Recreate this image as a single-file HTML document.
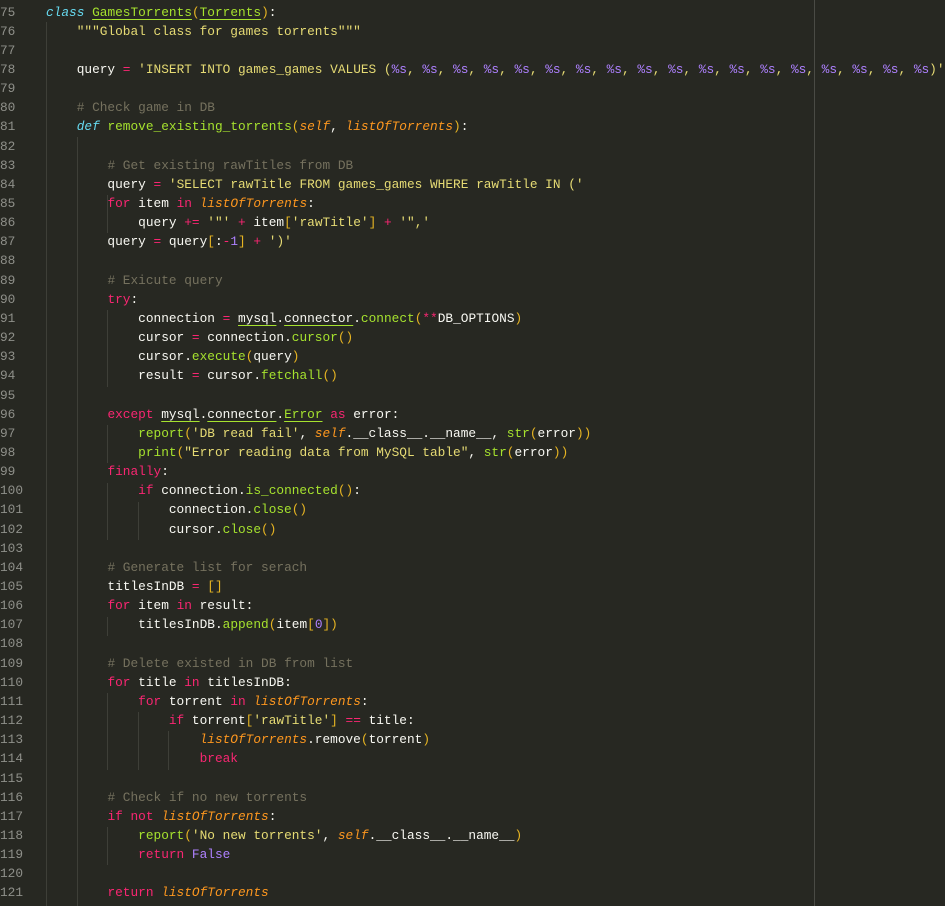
<!DOCTYPE html>
<html><head><meta charset="utf-8"><style>
html,body{margin:0;padding:0;background:#272822;width:945px;height:906px;overflow:hidden}
#w{position:relative;width:945px;height:906px;font-family:"Liberation Mono",monospace;font-size:12.8px;color:#f8f8f2}
.ln{position:absolute;left:0;width:40px;color:#8f908a}
.cd{position:absolute;left:46px;white-space:pre}
.row{position:absolute;left:0;height:19.15px;line-height:19.15px;width:945px}
.k{color:#f92672}.s{color:#e6db74}.c{color:#75715e}.f{color:#a6e22e}
.i{color:#66d9ef;font-style:italic}.p{color:#fd971f;font-style:italic}.n{color:#ae81ff}
.b{color:#e6b422}.u{text-decoration:underline;text-decoration-color:#a6e22e;text-underline-offset:3px}
.g{position:absolute;width:1px;background:#3e3f38}
</style></head><body><div id="w">
<div class="g" style="left:814px;top:0;height:906px;background:#4a4b45"></div>
<div class="g" style="left:46px;top:22px;height:884px"></div>
<div class="g" style="left:77px;top:137px;height:769px"></div>
<div class="g" style="left:107px;top:195px;height:38px"></div>
<div class="g" style="left:107px;top:310px;height:77px"></div>
<div class="g" style="left:107px;top:425px;height:38px"></div>
<div class="g" style="left:107px;top:483px;height:57px"></div>
<div class="g" style="left:138px;top:502px;height:38px"></div>
<div class="g" style="left:107px;top:617px;height:19px"></div>
<div class="g" style="left:107px;top:693px;height:77px"></div>
<div class="g" style="left:138px;top:712px;height:58px"></div>
<div class="g" style="left:168px;top:731px;height:39px"></div>
<div class="g" style="left:107px;top:827px;height:38px"></div>
<div id="lines"></div>
</div>
<script>
var L=[
'<span class="i">class</span> <span class="f u">GamesTorrents</span><span class="b">(</span><span class="f u">Torrents</span><span class="b">)</span>:',
'    <span class="s">"""Global class for games torrents"""</span>',
'',
'    query <span class="k">=</span> <span class="s">\'INSERT INTO games_games VALUES (</span>'+Array(19).join('<span class="n">%s</span><span class="s">, </span>').replace(/<span class="s">, <\/span>$/,'')+'<span class="s">)\'</span>',
'',
'    <span class="c"># Check game in DB</span>',
'    <span class="i">def</span> <span class="f">remove_existing_torrents</span><span class="b">(</span><span class="p">self</span>, <span class="p">listOfTorrents</span><span class="b">)</span>:',
'',
'        <span class="c"># Get existing rawTitles from DB</span>',
'        query <span class="k">=</span> <span class="s">\'SELECT rawTitle FROM games_games WHERE rawTitle IN (\'</span>',
'        <span class="k">for</span> item <span class="k">in</span> <span class="p">listOfTorrents</span>:',
'            query <span class="k">+=</span> <span class="s">\'"\'</span> <span class="k">+</span> item<span class="b">[</span><span class="s">\'rawTitle\'</span><span class="b">]</span> <span class="k">+</span> <span class="s">\'",\'</span>',
'        query <span class="k">=</span> query<span class="b">[</span>:<span class="k">-</span><span class="n">1</span><span class="b">]</span> <span class="k">+</span> <span class="s">\')\'</span>',
'',
'        <span class="c"># Exicute query</span>',
'        <span class="k">try</span>:',
'            connection <span class="k">=</span> <span class="u">mysql</span>.<span class="u">connector</span>.<span class="f">connect</span><span class="b">(</span><span class="k">**</span>DB_OPTIONS<span class="b">)</span>',
'            cursor <span class="k">=</span> connection.<span class="f">cursor</span><span class="b">()</span>',
'            cursor.<span class="f">execute</span><span class="b">(</span>query<span class="b">)</span>',
'            result <span class="k">=</span> cursor.<span class="f">fetchall</span><span class="b">()</span>',
'',
'        <span class="k">except</span> <span class="u">mysql</span>.<span class="u">connector</span>.<span class="f u">Error</span> <span class="k">as</span> error:',
'            <span class="f">report</span><span class="b">(</span><span class="s">\'DB read fail\'</span>, <span class="p">self</span>.__class__.__name__, <span class="f">str</span><span class="b">(</span>error<span class="b">))</span>',
'            <span class="f">print</span><span class="b">(</span><span class="s">"Error reading data from MySQL table"</span>, <span class="f">str</span><span class="b">(</span>error<span class="b">))</span>',
'        <span class="k">finally</span>:',
'            <span class="k">if</span> connection.<span class="f">is_connected</span><span class="b">()</span>:',
'                connection.<span class="f">close</span><span class="b">()</span>',
'                cursor.<span class="f">close</span><span class="b">()</span>',
'',
'        <span class="c"># Generate list for serach</span>',
'        titlesInDB <span class="k">=</span> <span class="b">[]</span>',
'        <span class="k">for</span> item <span class="k">in</span> result:',
'            titlesInDB.<span class="f">append</span><span class="b">(</span>item<span class="b">[</span><span class="n">0</span><span class="b">])</span>',
'',
'        <span class="c"># Delete existed in DB from list</span>',
'        <span class="k">for</span> title <span class="k">in</span> titlesInDB:',
'            <span class="k">for</span> torrent <span class="k">in</span> <span class="p">listOfTorrents</span>:',
'                <span class="k">if</span> torrent<span class="b">[</span><span class="s">\'rawTitle\'</span><span class="b">]</span> <span class="k">==</span> title:',
'                    <span class="p">listOfTorrents</span>.remove<span class="b">(</span>torrent<span class="b">)</span>',
'                    <span class="k">break</span>',
'',
'        <span class="c"># Check if no new torrents</span>',
'        <span class="k">if</span> <span class="k">not</span> <span class="p">listOfTorrents</span>:',
'            <span class="f">report</span><span class="b">(</span><span class="s">\'No new torrents\'</span>, <span class="p">self</span>.__class__.__name__<span class="b">)</span>',
'            <span class="k">return</span> <span class="n">False</span>',
'',
'        <span class="k">return</span> <span class="p">listOfTorrents</span>'
];
var h='';
for(var j=0;j<L.length;j++){
 h+='<div class="row" style="top:'+(2.5+j*19.15).toFixed(2)+'px"><span class="ln">'+(75+j)+'</span><span class="cd">'+L[j]+'</span></div>';
}
document.getElementById('lines').innerHTML=h;
</script>
</body></html>
